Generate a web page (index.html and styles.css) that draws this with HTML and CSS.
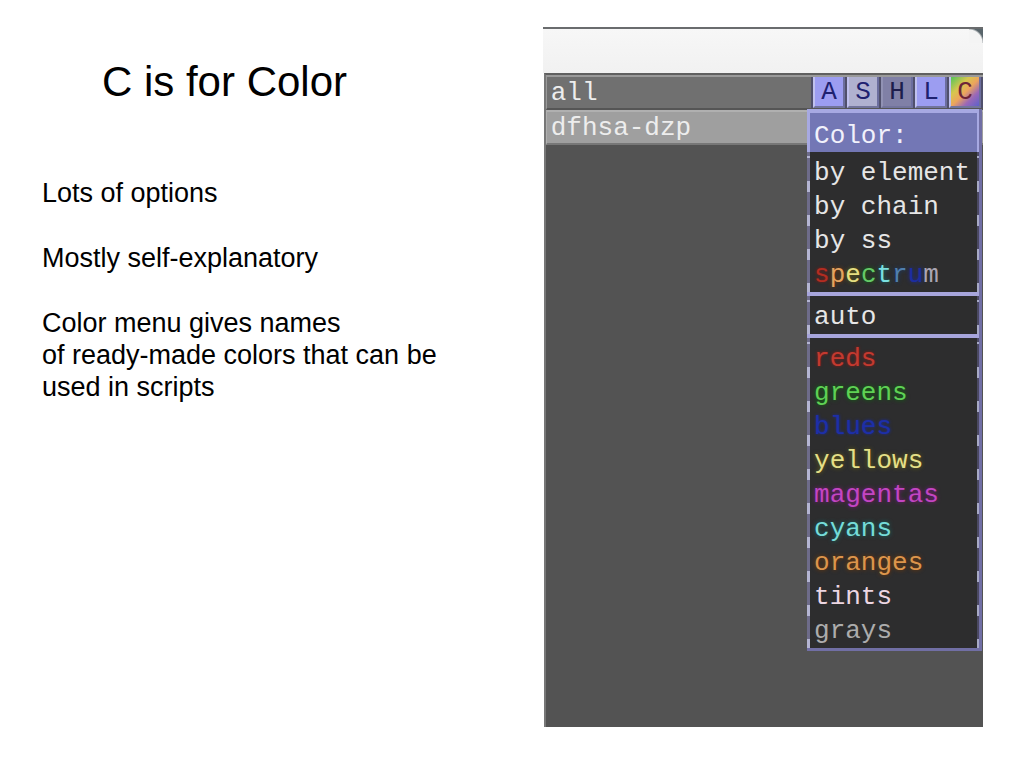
FILE: index.html
```html
<!DOCTYPE html>
<html lang="en">
<head>
<meta charset="utf-8">
<title>C is for Color</title>
<link rel="stylesheet" href="styles.css">
</head>
<body>
<main class="slide">
  <section class="notes">
    <h1 class="title">C is for Color</h1>
    <p>Lots of options</p>
    <p>Mostly self-explanatory</p>
    <p>Color menu gives names<br>of ready-made colors that can be<br>used in scripts</p>
  </section>
  <section class="viewer" aria-label="Object panel">
    <div class="titlebar"></div>
    <div class="panel">
      <div class="row row-all">
        <span class="name">all</span>
        <div class="tools">
          <button class="tool tool-a" type="button">A</button>
          <button class="tool tool-s" type="button">S</button>
          <button class="tool tool-h" type="button">H</button>
          <button class="tool tool-l" type="button">L</button>
          <button class="tool tool-c" type="button">C</button>
        </div>
      </div>
      <div class="row row-object"><span class="name">dfhsa-dzp</span></div>
      <div class="menu">
        <div class="menu-title">Color:</div>
        <div class="group">
          <button class="item" type="button">by element</button>
          <button class="item" type="button">by chain</button>
          <button class="item" type="button">by ss</button>
          <button class="item" type="button"><span class="sp-s">s</span><span class="sp-p">p</span><span class="sp-e">e</span><span class="sp-c">c</span><span class="sp-t">t</span><span class="sp-r">r</span><span class="sp-u">u</span><span class="sp-m">m</span></button>
        </div>
        <div class="group">
          <button class="item" type="button">auto</button>
        </div>
        <div class="group">
          <button class="item reds" type="button">reds</button>
          <button class="item greens" type="button">greens</button>
          <button class="item blues" type="button">blues</button>
          <button class="item yellows" type="button">yellows</button>
          <button class="item magentas" type="button">magentas</button>
          <button class="item cyans" type="button">cyans</button>
          <button class="item oranges" type="button">oranges</button>
          <button class="item tints" type="button">tints</button>
          <button class="item grays" type="button">grays</button>
        </div>
      </div>
    </div>
  </section>
</main>
</body>
</html>
```
FILE: styles.css
```css
* {
  box-sizing: border-box;
}

body {
  margin: 0;
  background: #fff;
  color: #000;
  font-family: "Liberation Sans", Arial, sans-serif;
}

.slide {
  display: flex;
  min-height: 100vh;
  padding: 27px 4% 41px;
}

.notes {
  flex: 1;
  padding: 31px 0 0 1px;
  font-size: 27px;
  line-height: 32px;
}

.notes p {
  margin: 0 0 33px;
}

.title {
  margin: 0 0 71px 60px;
  font-size: 42px;
  font-weight: 400;
  line-height: 48px;
}

.viewer {
  display: flex;
  flex-direction: column;
  width: 43vw;
  font-family: "Liberation Mono", "Courier New", monospace;
  font-size: 26px;
  line-height: 34px;
}

.titlebar {
  height: 46px;
  border-top: 2px solid #6a6c6e;
  background: radial-gradient(circle at 0 100%, #f4f4f4 13px, #59656b 15px) top right / 14px 14px no-repeat, linear-gradient(#f7f7f7, #f1f1f1);
}

.panel {
  position: relative;
  flex: 1;
  margin-left: 1px;
  border-left: 2px solid #777;
  border-top: 2px solid #606060;
  background: #535353;
}

.row {
  display: flex;
  height: 35px;
  border: solid #9a9a9a;
  border-width: 2px 0 0 1px;
  border-bottom: 2px solid #555;
  color: #ededed;
  line-height: 32px;
}

.row-all {
  background: #707070;
}

.row-object {
  border-color: #b0b0b0;
  border-bottom-color: #777;
  background: #9f9f9f;
}

.name {
  flex: 1;
  padding-left: 4px;
}

.tools {
  display: flex;
  gap: 2px;
  padding: 0 2px;
  background: #50506c;
}

.tool {
  width: 32px;
  padding: 0;
  border: solid;
  border-width: 0 2px 2px;
  border-color: #b9bbef #6c6e9e #72749c #c0c1ee;
  color: #1e2170;
  font: inherit;
  line-height: 30px;
}

.tool-a,
.tool-l {
  background: #9c9df1;
}

.tool-s {
  background: #b0b1d0;
}

.tool-h {
  border-left-color: #9192b4;
  background: #8080a6;
  color: #1d1d4c;
}

.tool-c {
  background: linear-gradient(135deg, #62c558 4%, #d7c64e 32%, #eda45c 52%, #9a68b8 74%, #5d61cb);
  color: #6d2438;
}

.menu {
  position: absolute;
  top: 34px;
  right: 1px;
  width: 175px;
  border: solid #716fa5;
  border-width: 0 3px 3px 0;
  background: #2d2d2e;
}

.menu-title {
  height: 43px;
  padding-left: 4px;
  border: solid #a7a9e2;
  border-width: 4px 2px 0 3px;
  background: #7377b5;
  color: #f1f1fb;
  line-height: 46px;
}

.group {
  padding-top: 4px;
  background:
    linear-gradient(#6e6c8a, #6e6c8a) left / 3px 100% no-repeat,
    linear-gradient(#4b4963, #4b4963) right / 2px 100% no-repeat;
}

.group + .group {
  border-top: 4px solid #a7a5dc;
}

.item {
  display: block;
  width: 100%;
  height: 34px;
  padding: 0 0 0 7px;
  border: 0;
  background:
    linear-gradient(#b4b5d2 2px, #6e6c8a 2px 25px, #b4b5d2 25px) left / 3px 100% no-repeat,
    linear-gradient(#a7a9c6 2px, #4b4963 2px 25px, #a7a9c6 25px) right / 2px 100% no-repeat;
  color: #e6e6e6;
  font: inherit;
  text-align: left;
  white-space: nowrap;
}

.reds { color: #c33a30; text-shadow: 0 0 3px #951812; }
.greens { color: #5fd155; text-shadow: 0 0 4px #087008; }
.blues { color: #1d2fa8; text-shadow: 0 0 3px #1a2ba6; }
.yellows { color: #e4df88; text-shadow: 0 0 4px #6b6810; }
.magentas { color: #c345c3; text-shadow: 0 0 4px #841584; }
.cyans { color: #76dcd8; text-shadow: 0 0 4px #117070; }
.oranges { color: #dc954c; text-shadow: 0 0 4px #7c3c04; }
.tints { color: #ecd6e2; }
.grays { color: #acacac; }

.sp-s { color: #b32d22; text-shadow: 0 0 3px #8d1912; }
.sp-p { color: #e5a35f; text-shadow: 0 0 4px #7c3c04; }
.sp-e { color: #e6df81; text-shadow: 0 0 4px #6b6810; }
.sp-c { color: #65c967; text-shadow: 0 0 4px #087008; }
.sp-t { color: #7be0e0; text-shadow: 0 0 4px #117070; }
.sp-r { color: #507fae; text-shadow: 0 0 4px #173b70; }
.sp-u { color: #1c2da0; text-shadow: 0 0 4px #1a2ba6; }
.sp-m { color: #aaa5b5; }
```
